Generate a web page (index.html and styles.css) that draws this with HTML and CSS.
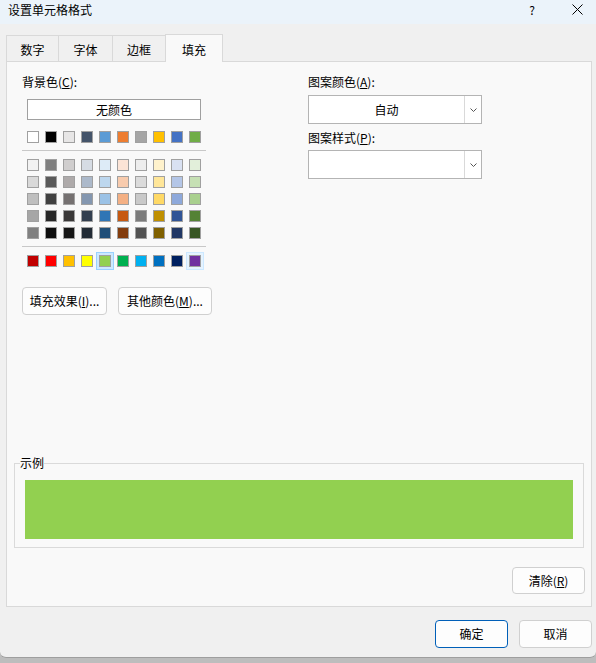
FILE: index.html
```html
<!DOCTYPE html>
<html lang="zh-CN">
<head>
<meta charset="utf-8">
<title>设置单元格格式</title>
<link rel="stylesheet" href="styles.css">
</head>
<body>
<div class="window">
  <div class="titlebar">
    <span class="title">设置单元格格式</span>
    <span class="help">?</span>
    <svg class="close" viewBox="0 0 11 11" width="11" height="11"><path d="M0.5 0.5 L10.5 10.5 M10.5 0.5 L0.5 10.5"/></svg>
  </div>
  <div class="tabs">
    <div class="tab t1">数字</div>
    <div class="tab t2">字体</div>
    <div class="tab t3">边框</div>
    <div class="tab t4 active">填充</div>
  </div>
  <div class="panel">
    <div class="top">
      <div class="left">
        <div class="label">背景色(<u>C</u>):</div>
        <div class="nocolor">无颜色</div>
        <div class="swrow">
          <span class="sw" style="background:#ffffff"></span>
          <span class="sw" style="background:#000000"></span>
          <span class="sw" style="background:#e7e6e6"></span>
          <span class="sw" style="background:#44546a"></span>
          <span class="sw" style="background:#5b9bd5"></span>
          <span class="sw" style="background:#ed7d31"></span>
          <span class="sw" style="background:#a5a5a5"></span>
          <span class="sw" style="background:#ffc000"></span>
          <span class="sw" style="background:#4472c4"></span>
          <span class="sw" style="background:#70ad47"></span>
        </div>
        <div class="sep"></div>
        <div class="grid">
          <span class="sw" style="background:#f2f2f2"></span>
          <span class="sw" style="background:#7f7f7f"></span>
          <span class="sw" style="background:#d0cece"></span>
          <span class="sw" style="background:#d6dce4"></span>
          <span class="sw" style="background:#ddebf7"></span>
          <span class="sw" style="background:#fce4d6"></span>
          <span class="sw" style="background:#ededed"></span>
          <span class="sw" style="background:#fff2cc"></span>
          <span class="sw" style="background:#d9e1f2"></span>
          <span class="sw" style="background:#e2efda"></span>

          <span class="sw" style="background:#d9d9d9"></span>
          <span class="sw" style="background:#595959"></span>
          <span class="sw" style="background:#aeaaaa"></span>
          <span class="sw" style="background:#acb9ca"></span>
          <span class="sw" style="background:#bdd7ee"></span>
          <span class="sw" style="background:#f8cbad"></span>
          <span class="sw" style="background:#dbdbdb"></span>
          <span class="sw" style="background:#ffe699"></span>
          <span class="sw" style="background:#b4c6e7"></span>
          <span class="sw" style="background:#c6e0b4"></span>

          <span class="sw" style="background:#bfbfbf"></span>
          <span class="sw" style="background:#404040"></span>
          <span class="sw" style="background:#757171"></span>
          <span class="sw" style="background:#8497b0"></span>
          <span class="sw" style="background:#9bc2e6"></span>
          <span class="sw" style="background:#f4b084"></span>
          <span class="sw" style="background:#c9c9c9"></span>
          <span class="sw" style="background:#ffd966"></span>
          <span class="sw" style="background:#8ea9db"></span>
          <span class="sw" style="background:#a9d08e"></span>

          <span class="sw" style="background:#a6a6a6"></span>
          <span class="sw" style="background:#262626"></span>
          <span class="sw" style="background:#3a3838"></span>
          <span class="sw" style="background:#333f4f"></span>
          <span class="sw" style="background:#2f75b5"></span>
          <span class="sw" style="background:#c65911"></span>
          <span class="sw" style="background:#7b7b7b"></span>
          <span class="sw" style="background:#bf8f00"></span>
          <span class="sw" style="background:#305496"></span>
          <span class="sw" style="background:#548235"></span>

          <span class="sw" style="background:#808080"></span>
          <span class="sw" style="background:#0d0d0d"></span>
          <span class="sw" style="background:#161616"></span>
          <span class="sw" style="background:#222b35"></span>
          <span class="sw" style="background:#1f4e78"></span>
          <span class="sw" style="background:#833c0c"></span>
          <span class="sw" style="background:#525252"></span>
          <span class="sw" style="background:#806000"></span>
          <span class="sw" style="background:#203764"></span>
          <span class="sw" style="background:#375623"></span>
        </div>
        <div class="sep"></div>
        <div class="swrow std">
          <span class="sw" style="background:#c00000"></span>
          <span class="sw" style="background:#ff0000"></span>
          <span class="sw" style="background:#ffc000"></span>
          <span class="sw" style="background:#ffff00"></span>
          <span class="sw selected" style="background:#92d050"></span>
          <span class="sw" style="background:#00b050"></span>
          <span class="sw" style="background:#00b0f0"></span>
          <span class="sw" style="background:#0070c0"></span>
          <span class="sw" style="background:#002060"></span>
          <span class="sw hover" style="background:#7030a0"></span>
        </div>
        <div class="btns">
          <button class="btn fx">填充效果(<u>I</u>)...</button>
          <button class="btn more">其他颜色(<u>M</u>)...</button>
        </div>
      </div>
      <div class="right">
        <div class="label">图案颜色(<u>A</u>):</div>
        <div class="dd">
          <span class="val">自动</span>
          <span class="arrow"><svg viewBox="0 0 7 4" width="7" height="4"><path d="M0.5 0.5 L3.5 3.5 L6.5 0.5"/></svg></span>
        </div>
        <div class="label l2">图案样式(<u>P</u>):</div>
        <div class="dd dd2">
          <span class="val"></span>
          <span class="arrow"><svg viewBox="0 0 7 4" width="7" height="4"><path d="M0.5 0.5 L3.5 3.5 L6.5 0.5"/></svg></span>
        </div>
      </div>
    </div>
    <fieldset class="sample">
      <legend>示例</legend>
      <div class="fill"></div>
    </fieldset>
    <div class="clear-row">
      <button class="btn clear">清除(<u>R</u>)</button>
    </div>
  </div>
  <div class="footer">
    <button class="btn ok">确定</button>
    <button class="btn cancel">取消</button>
  </div>
</div>
</body>
</html>
```
FILE: styles.css
```css
* { box-sizing: border-box; }
html { background: #bdbdbd; }
body {
  margin: 0;
  font-family: "Noto Sans CJK SC", "Noto Sans", sans-serif;
  font-size: 12px;
  line-height: 16px;
  color: #000;
}
u { text-underline-offset: 1px; }

.window {
  width: 596px;
  height: 658px;
  background: #f0f0f0;
  border-bottom: 1px solid #9e9e9e;
  border-radius: 0 0 6px 6px;
  overflow: hidden;
}

.titlebar {
  height: 24px;
  background: #ebf3fa;
  display: flex;
  align-items: flex-start;
  padding: 2px 0 0 8px;
}
.title { flex: 1; }
.help { margin-right: 37px; }
.close { margin: 2px 13px 0 0; flex: none; }
.close path { stroke: #000; stroke-width: 1; fill: none; }

.tabs {
  height: 37px;
  display: flex;
  align-items: flex-end;
  padding-left: 6px;
}
.tab {
  height: 26px;
  border: 1px solid #d9d9d9;
  border-bottom: 0;
  margin-right: -1px;
  padding-top: 6px;
  text-align: center;
  background: #f0f0f0;
}
.t1 { width: 53px; }
.t2 { width: 55px; }
.t3 { width: 54px; }
.t4 { width: 58px; }
.tab.active {
  height: 28px;
  margin-bottom: -1px;
  padding-top: 7px;
  background: #f9f9f9;
  z-index: 1;
}

.panel {
  margin-left: 6px;
  width: 586px;
  height: 546px;
  border: 1px solid #d9d9d9;
  background: #f9f9f9;
}

.top {
  display: flex;
  padding-left: 15px;
  height: 253px;
}
.left { width: 286px; }
.right { width: 174px; }

.label { margin-top: 12px; }
.l2 { margin-top: 6px; }

.nocolor {
  margin: 9px 0 0 5px;
  width: 174px;
  height: 21px;
  border: 1px solid #a0a0a0;
  background: #fff;
  text-align: center;
  line-height: 19px;
}

.swrow {
  display: flex;
  gap: 6px;
  margin: 11px 0 0 5px;
}
.swrow.std { margin-top: 8px; }
.sw {
  display: block;
  width: 12px;
  height: 12px;
  border: 1px solid #a0a0a0;
  flex: none;
}
.sw.selected { box-shadow: 0 0 0 2px #cce8ff, 0 0 0 3px #99d1ff; }
.sw.hover { box-shadow: 0 0 0 2px #e5f3ff, 0 0 0 3px #cce8ff; }

.sep {
  width: 184px;
  height: 1px;
  background: #c8c8c8;
  margin-top: 7px;
}

.grid {
  display: grid;
  grid-template-columns: repeat(10, 12px);
  gap: 5px 6px;
  margin: 8px 0 0 5px;
}

.btns {
  display: flex;
  gap: 11px;
  margin-top: 20px;
}
.btn {
  height: 28px;
  border: 1px solid #d0d0d0;
  border-radius: 4px;
  background: #fdfdfd;
  font: inherit;
  line-height: 16px;
  color: #000;
  padding: 0;
}
.fx { width: 85px; }
.more { width: 94px; }

.dd {
  margin-top: 5px;
  width: 174px;
  height: 29px;
  border: 1px solid #b4b4b4;
  background: #fff;
  display: flex;
}
.dd2 { margin-top: 4px; }
.dd .val {
  flex: 1;
  text-align: center;
  line-height: 27px;
}
.dd .arrow {
  width: 17px;
  border-left: 1px solid #d9d9d9;
  display: flex;
  align-items: center;
  justify-content: center;
}
.dd .arrow path { stroke: #555; stroke-width: 1; fill: none; }

.sample {
  margin: 140px 7px 0 7px;
  padding: 0 10px 8px;
  border: 1px solid #dadada;
  min-width: 0;
}
.sample legend {
  padding: 0;
  margin-left: -5px;
  line-height: 16px;
}
.fill {
  margin-top: 9px;
  height: 59px;
  background: #92d050;
}

.clear-row {
  display: flex;
  justify-content: flex-end;
  margin: 19px 6px 0 0;
}
.clear { width: 73px; height: 27px; }

.footer {
  display: flex;
  justify-content: flex-end;
  gap: 11px;
  margin: 13px 4px 0 0;
}
.ok, .cancel { width: 73px; }
.ok { border-color: #005fb8; }
```
